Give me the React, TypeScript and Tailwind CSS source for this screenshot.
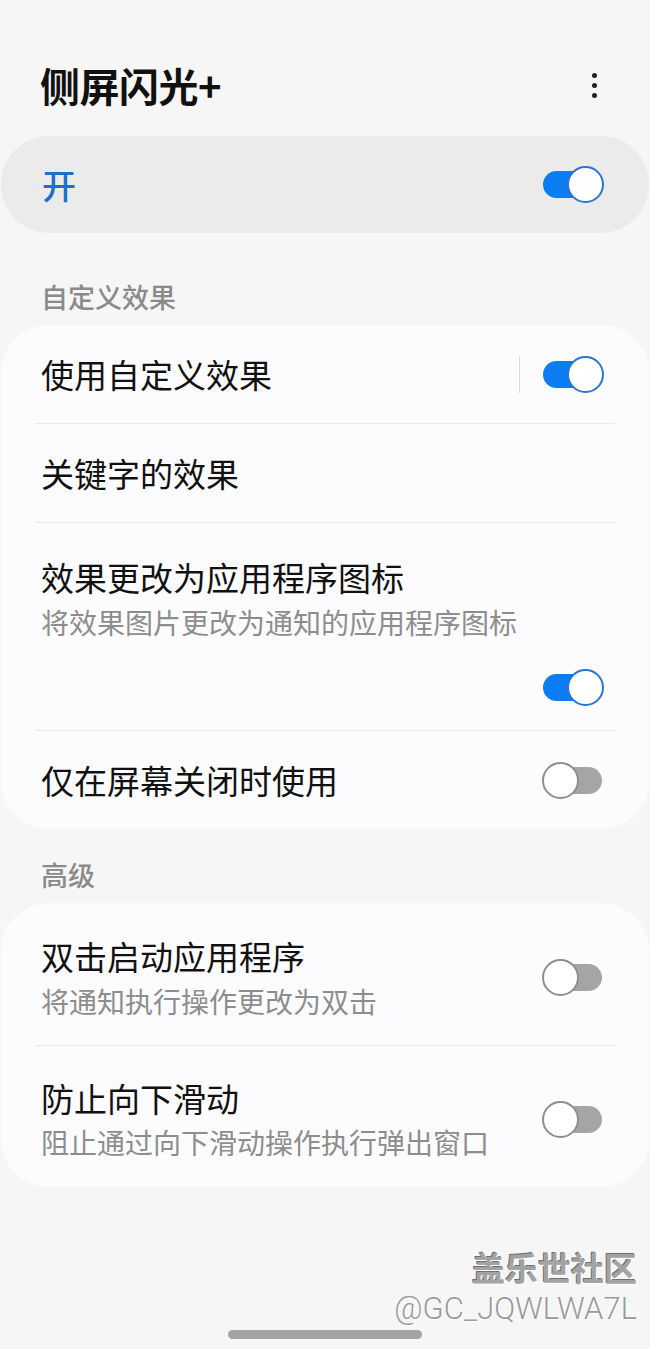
import React from "react";

const FONT = "font-['Noto_Sans_CJK_SC','Noto_Sans',sans-serif]";

function Toggle({ on }: { on: boolean }) {
  return (
    <div className="relative h-[37px] w-[62px] shrink-0">
      <div
        className={
          "absolute left-[1px] right-[2px] top-[5px] h-[27px] rounded-full " +
          (on ? "bg-[#0b7cf2]" : "bg-[#a5a5a5]")
        }
      />
      <div
        className={
          "absolute top-0 h-[37px] w-[37px] rounded-full border-2 bg-white " +
          (on ? "right-0 border-[#2a74d4]" : "left-0 border-[#8e8e8e]")
        }
      />
    </div>
  );
}

function Divider() {
  return <div className="mx-[34px] h-[1px] bg-[#e9e9ee]" />;
}

function SectionHeader({ children }: { children: React.ReactNode }) {
  return <div className="px-[41px] text-[27px] leading-[36px] font-medium text-[#8a8a8a]">{children}</div>;
}

export default function App() {
  return (
    <div className={"min-h-[1349px] w-[650px] bg-[#f6f6f6] " + FONT}>
      {/* app bar */}
      <div className="flex items-center justify-between pl-[40px] pr-[53px] pt-[60px]">
        <h1 className="text-[40px] leading-[50px] font-bold tracking-[-0.5px] text-[#111]">侧屏闪光+</h1>
        <div className="flex flex-col items-center gap-[5px]">
          <span className="h-[5px] w-[5px] rounded-full bg-[#222]" />
          <span className="h-[5px] w-[5px] rounded-full bg-[#222]" />
          <span className="h-[5px] w-[5px] rounded-full bg-[#222]" />
        </div>
      </div>

      {/* master switch */}
      <div className="mx-[1px] mt-[26px] flex h-[97px] items-center justify-between rounded-[48px] bg-[#ebebeb] pl-[41px] pr-[45px]">
        <span className="text-[34px] font-medium text-[#1a6fcf]">开</span>
        <Toggle on />
      </div>

      <div className="mt-[46px]">
        <SectionHeader>自定义效果</SectionHeader>
      </div>

      <div className="mx-[1px] mt-[10px] rounded-[48px] bg-[#fcfcfe] text-[#111]">
        <div className="flex h-[98px] items-center justify-between pl-[40px] pr-[45px]">
          <span className="text-[33px] leading-[40px]">使用自定义效果</span>
          <div className="flex items-center gap-[22px]">
            <div className="h-[37px] w-[1px] bg-[#d9d9d9]" />
            <Toggle on />
          </div>
        </div>
        <Divider />
        <div className="flex h-[98px] items-center pl-[40px] pr-[45px]">
          <span className="text-[33px] leading-[40px]">关键字的效果</span>
        </div>
        <Divider />
        <div className="flex flex-col pl-[40px] pr-[45px] pt-[34px] pb-[24px]">
          <span className="text-[33px] leading-[40px]">效果更改为应用程序图标</span>
          <span className="mt-[7px] text-[28px] leading-[36px] text-[#8d8d8d]">将效果图片更改为通知的应用程序图标</span>
          <div className="mt-[29px] flex justify-end">
            <Toggle on />
          </div>
        </div>
        <Divider />
        <div className="flex h-[98px] items-center justify-between pl-[40px] pr-[45px]">
          <span className="text-[33px] leading-[40px]">仅在屏幕关闭时使用</span>
          <Toggle on={false} />
        </div>
      </div>

      <div className="mt-[28px]">
        <SectionHeader>高级</SectionHeader>
      </div>

      <div className="mx-[1px] mt-[10px] rounded-[48px] bg-[#fcfcfe] text-[#111]">
        <div className="flex items-center justify-between pl-[40px] pr-[45px] pt-[33px] pb-[26px]">
          <div className="flex flex-col">
            <span className="text-[33px] leading-[40px]">双击启动应用程序</span>
            <span className="mt-[7px] text-[28px] leading-[36px] text-[#8d8d8d]">将通知执行操作更改为双击</span>
          </div>
          <Toggle on={false} />
        </div>
        <Divider />
        <div className="flex items-center justify-between pl-[40px] pr-[45px] pt-[32px] pb-[27px]">
          <div className="flex flex-col">
            <span className="text-[33px] leading-[40px]">防止向下滑动</span>
            <span className="mt-[6px] text-[28px] leading-[36px] text-[#8d8d8d]">阻止通过向下滑动操作执行弹出窗口</span>
          </div>
          <Toggle on={false} />
        </div>
      </div>

      {/* watermark */}
      <div className="mt-[62px] flex flex-col items-end pr-[13px]">
        <span className="text-[33px] leading-[36px] font-bold text-[#a3a3a3] [text-shadow:1px_1px_0_#ffffff,-1px_-1px_0_#6f6f6f]">
          盖乐世社区
        </span>
        <span className="mt-[6px] font-['Roboto',sans-serif] text-[31px] leading-[36px] font-light text-[#9a9a9a] [text-shadow:1px_1px_0_#ffffff]">
          @GC_JQWLWA7L
        </span>
      </div>

      {/* home indicator */}
      <div className="mt-[3px] flex justify-center">
        <div className="h-[9px] w-[194px] rounded-full bg-[#a3a3a3]" />
      </div>
    </div>
  );
}
